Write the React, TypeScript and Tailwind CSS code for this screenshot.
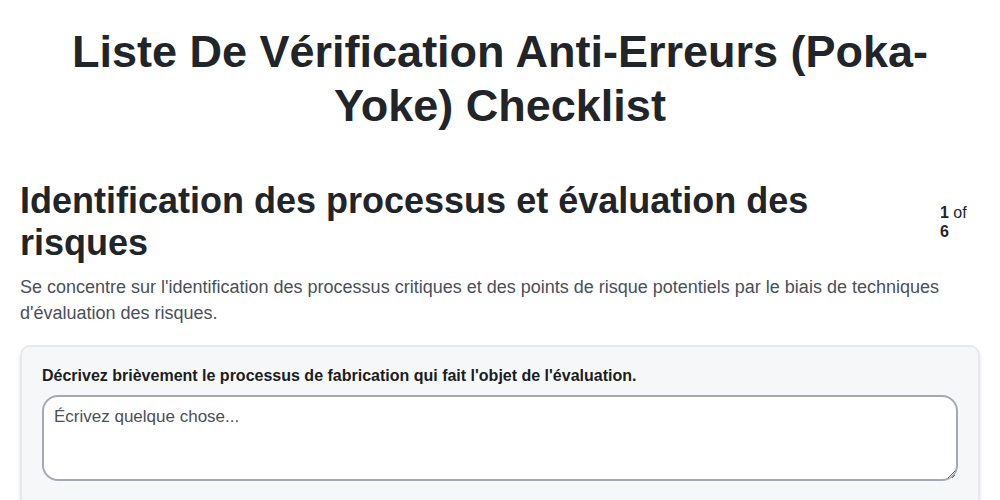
export default function App() {
  return (
    <div className="min-h-screen bg-white px-5 text-[#212529]" style={{ fontFamily: '"Liberation Sans", Arial, sans-serif' }}>
      <h1 className="mx-auto max-w-[900px] pt-[25px] text-center text-[45px] font-bold leading-[54px]">
        Liste De Vérification Anti-Erreurs (Poka-Yoke) Checklist
      </h1>

      <div className="mt-[47px] flex items-center gap-5">
        <h2 className="flex-1 text-[36px] font-bold leading-[42px]">
          Identification des processus et évaluation des risques
        </h2>
        <div className="w-10 shrink-0 text-base leading-[19px]">
          <span className="font-bold">1</span> of <span className="font-bold">6</span>
        </div>
      </div>

      <p className="mt-[10px] text-[18px] leading-[26px] text-[#4a4f5a]">
        Se concentre sur l'identification des processus critiques et des points de risque potentiels par le biais de techniques d'évaluation des risques.
      </p>

      <div className="mt-[19px] rounded-[10px] border-2 border-[#e6e8eb] bg-[#f6f7f9] px-5 pt-[19px] pb-6 shadow-md">
        <label className="block text-base font-bold leading-5 text-[#1a1d21]">
          Décrivez brièvement le processus de fabrication qui fait l'objet de l'évaluation.
        </label>
        <textarea
          className="mt-[9px] block h-[86px] w-full rounded-2xl border-2 border-[#a3a9b1] bg-white px-[10px] py-[7px] text-[17px] text-[#212529] placeholder:text-[#4a4f5a] focus:outline-none"
          placeholder="Écrivez quelque chose..."
        />
      </div>
    </div>
  );
}
